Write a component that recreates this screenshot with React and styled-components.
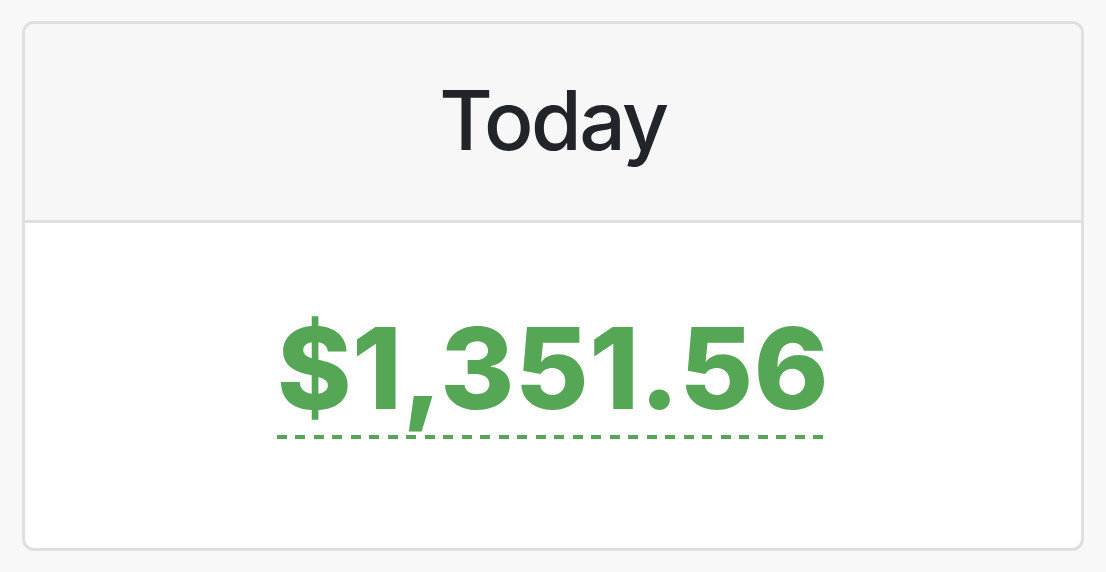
import React from "react";
import styled, { createGlobalStyle } from "styled-components";

const GlobalStyle = createGlobalStyle`
  html, body {
    margin: 0;
    background: #f8f8f8;
  }
  body {
    font-family: Inter, "Noto Sans", "Liberation Sans", sans-serif;
  }
`;

const StyledPage = styled.div`
  width: 1106px;
  height: 572px;
  box-sizing: border-box;
  padding: 21px 22px;
`;

const StyledCard = styled.div`
  height: 100%;
  box-sizing: border-box;
  display: flex;
  flex-direction: column;
  background: #fff;
  border: 3px solid #dfdfdf;
  border-radius: 12px;
  overflow: hidden;
`;

const StyledCardHeader = styled.div`
  height: 196px;
  flex: none;
  display: flex;
  align-items: center;
  justify-content: center;
  background: #f7f7f7;
  border-bottom: 3px solid #dfdfdf;
`;

const StyledTitle = styled.h2`
  margin: 0 0 4px;
  font-size: 82px;
  font-weight: 500;
  color: #212529;
  letter-spacing: -2.5px;
`;

const StyledCardBody = styled.div`
  flex: 1;
  display: flex;
  align-items: flex-start;
  justify-content: center;
  padding-top: 83px;
`;

const StyledAmount = styled.span`
  font-size: 113px;
  font-weight: 800;
  line-height: 1.1;
  letter-spacing: 0.5px;
  color: ${({ positive }) => (positive ? "#55a655" : "#d9534f")};
  padding-bottom: 9px;
  background-image: repeating-linear-gradient(
    to right,
    currentColor 0,
    currentColor 10px,
    transparent 10px,
    transparent 18.5px
  );
  background-size: 100% 4px;
  background-position: left bottom;
  background-repeat: no-repeat;
`;

const App = () => (
  <StyledPage>
    <GlobalStyle />
    <StyledCard>
      <StyledCardHeader>
        <StyledTitle>Today</StyledTitle>
      </StyledCardHeader>
      <StyledCardBody>
        <StyledAmount positive>$1,351.56</StyledAmount>
      </StyledCardBody>
    </StyledCard>
  </StyledPage>
);

export default App;
